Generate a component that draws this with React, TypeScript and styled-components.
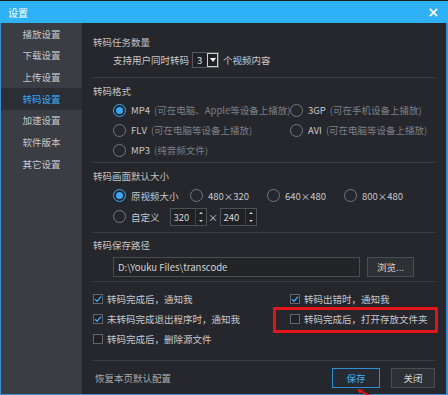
import { JSX } from 'react';
import styled, { createGlobalStyle } from 'styled-components';

const GlobalStyle = createGlobalStyle`
  html, body {
    margin: 0;
    padding: 0;
    background: #1b1d22;
  }
  body {
    font-family: "Noto Sans CJK SC", "Liberation Sans", sans-serif;
    font-size: 9.5px;
    color: #c8c9cc;
  }
`;

const Window = styled.div`
  position: relative;
  width: 448px;
  height: 395px;
  padding-top: 1px;
  box-sizing: border-box;
  display: flex;
  flex-direction: column;
  overflow: hidden;
`;

const TitleBar = styled.div`
  height: 22px;
  flex: none;
  background: #2eb1f7;
  display: flex;
  align-items: center;
  justify-content: space-between;
  padding: 0 10px 0 8px;
  color: #fff;
  font-size: 10px;
`;

const CloseIcon = styled.svg`
  width: 9px;
  height: 9px;
`;

const Body = styled.div`
  flex: 1;
  display: flex;
  min-height: 0;
  border-left: 1px solid #3b8fd2;
  border-right: 2px solid #3b8fd2;
  border-bottom: 1px solid #3b8fd2;
`;

const Sidebar = styled.div`
  width: 81px;
  flex: none;
  background: #3a3d44;
  display: flex;
  flex-direction: column;
`;

const NavItem = styled.div<{ $active?: boolean }>`
  height: 21.65px;
  display: flex;
  align-items: center;
  justify-content: center;
  color: ${(p) => (p.$active ? '#3aa9f5' : '#c6c7ca')};
  background: ${(p) => (p.$active ? '#2b2e34' : 'transparent')};
`;

const Main = styled.div`
  flex: 1;
  min-width: 0;
  background: #25272c;
  display: flex;
  flex-direction: column;
  padding: 0 11px 0 11px;
`;

const Section = styled.div<{ $h: number; $pt: number }>`
  height: ${(p) => p.$h}px;
  flex: none;
  padding-top: ${(p) => p.$pt}px;
  box-sizing: border-box;
  border-bottom: 1px solid #3a3d43;
`;

const Heading = styled.div`
  height: 18px;
  line-height: 18px;
  color: #c2c4c7;
`;

const Row = styled.div<{ $h?: number }>`
  height: ${(p) => p.$h ?? 20}px;
  display: flex;
  align-items: center;
  padding-left: 20px;
`;

const Grid = styled.div<{ $cols: string; $rowH: number }>`
  display: grid;
  grid-template-columns: ${(p) => p.$cols};
  grid-auto-rows: ${(p) => p.$rowH}px;
  align-items: center;
`;

const Option = styled.div`
  display: flex;
  align-items: center;
  white-space: nowrap;
`;

const Radio = styled.span<{ $on?: boolean }>`
  width: 11px;
  height: 11px;
  border-radius: 50%;
  border: 1px solid ${(p) => (p.$on ? '#3aa9f5' : '#74777c')};
  margin-right: 5px;
  flex: none;
  display: flex;
  align-items: center;
  justify-content: center;
  &::after {
    content: '';
    width: 7px;
    height: 7px;
    border-radius: 50%;
    background: ${(p) => (p.$on ? '#3aa9f5' : 'transparent')};
  }
`;

const Hint = styled.span`
  color: #7c7f84;
  margin-left: 4px;
`;

const SelectBox = styled.div`
  width: 27px;
  height: 16px;
  box-sizing: border-box;
  border: 1px solid #55585e;
  background: #1f2125;
  display: flex;
  align-items: center;
  justify-content: space-between;
  padding-left: 4px;
  margin: 0 4px 0 3px;
  color: #e0e0e0;
`;

const DropBtn = styled.span`
  width: 11px;
  height: 14px;
  box-sizing: border-box;
  border: 1px solid #d0d0d0;
  display: flex;
  align-items: center;
  justify-content: center;
  &::after {
    content: '';
    border-left: 3px solid transparent;
    border-right: 3px solid transparent;
    border-top: 4px solid #fff;
  }
`;

const Spin = styled.div`
  width: 37px;
  height: 18px;
  box-sizing: border-box;
  border: 1px solid #4e5157;
  background: #1f2125;
  display: flex;
  align-items: stretch;
  color: #d8d9db;
`;

const SpinValue = styled.span`
  flex: 1;
  display: flex;
  align-items: center;
  padding-left: 3px;
`;

const SpinArrows = styled.span`
  width: 10px;
  border-left: 1px solid #3c3f45;
  display: flex;
  flex-direction: column;
`;

const SpinArrow = styled.span<{ $up?: boolean }>`
  flex: 1;
  display: flex;
  align-items: center;
  justify-content: center;
  &::after {
    content: '';
    border-left: 2px solid transparent;
    border-right: 2px solid transparent;
    ${(p) => (p.$up ? 'border-bottom: 2px solid #d0d0d0;' : 'border-top: 2px solid #d0d0d0;')}
  }
`;

const Times = styled.span`
  width: 13px;
  text-align: center;
  color: #c8c9cc;
`;

const PathInput = styled.div`
  width: 247px;
  height: 20px;
  box-sizing: border-box;
  border: 1px solid #4a4d53;
  background: #222428;
  display: flex;
  align-items: center;
  padding-left: 4px;
  color: #d4d5d7;
`;

const Button = styled.div<{ $primary?: boolean }>`
  height: 20px;
  box-sizing: border-box;
  border: 1px solid ${(p) => (p.$primary ? '#2f8fd3' : '#4a4d53')};
  background: ${(p) => (p.$primary ? '#262b33' : '#2d3035')};
  color: ${(p) => (p.$primary ? '#45aef5' : '#d4d5d7')};
  display: flex;
  align-items: center;
  justify-content: center;
`;

const PathRow = styled.div`
  display: flex;
  align-items: center;
  gap: 7px;
  padding-left: 20px;
  margin-top: 3px;
`;

const Check = styled.span<{ $on?: boolean }>`
  width: 10px;
  height: 10px;
  box-sizing: border-box;
  border: 1px solid #63666c;
  background: #1f2125;
  margin-right: 4px;
  flex: none;
  display: flex;
  align-items: center;
  justify-content: center;
`;

const Footer = styled.div`
  flex: 1;
  display: flex;
  align-items: center;
  justify-content: space-between;
  padding-left: 2px;
  color: #a9abae;
`;

const FooterButtons = styled.div`
  display: flex;
  gap: 11px;
`;

const Highlight = styled.div`
  position: absolute;
  left: 273px;
  top: 307px;
  width: 165px;
  height: 26px;
  box-sizing: border-box;
  border: 3px solid #e4141b;
  pointer-events: none;
`;

const Arrow = styled.svg`
  position: absolute;
  left: 355px;
  top: 388px;
  width: 16px;
  height: 7px;
`;

const nav = ['播放设置', '下载设置', '上传设置', '转码设置', '加速设置', '软件版本', '其它设置'];

const Tick = (): JSX.Element => (
  <svg width="8" height="8" viewBox="0 0 8 8">
    <path d="M1 4.2 L3.1 6.2 L7 1.6" fill="none" stroke="#3aa9f5" strokeWidth="1.4" />
  </svg>
);

const CheckItem = ({ on, label }: { on?: boolean; label: string }): JSX.Element => (
  <Option>
    <Check $on={on}>{on && <Tick />}</Check>
    {label}
  </Option>
);

const RadioItem = ({ on, label, hint }: { on?: boolean; label: string; hint?: string }): JSX.Element => (
  <Option>
    <Radio $on={on} />
    {label}
    {hint && <Hint>{hint}</Hint>}
  </Option>
);

const SpinBox = ({ value }: { value: string }): JSX.Element => (
  <Spin>
    <SpinValue>{value}</SpinValue>
    <SpinArrows>
      <SpinArrow $up />
      <SpinArrow />
    </SpinArrows>
  </Spin>
);

export default function App(): JSX.Element {
  return (
    <Window>
      <GlobalStyle />
      <TitleBar>
        <span>设置</span>
        <CloseIcon viewBox="0 0 10 10">
          <path d="M1 1 L9 9 M9 1 L1 9" stroke="#fff" strokeWidth="2" />
        </CloseIcon>
      </TitleBar>
      <Body>
        <Sidebar>
          {nav.map((n) => (
            <NavItem key={n} $active={n === '转码设置'}>
              {n}
            </NavItem>
          ))}
        </Sidebar>
        <Main>
          <Section $h={55} $pt={10}>
            <Heading>转码任务数量</Heading>
            <Row $h={18}>
              支持用户同时转码
              <SelectBox>
                3<DropBtn />
              </SelectBox>
              个视频内容
            </Row>
          </Section>

          <Section $h={85} $pt={4}>
            <Heading>转码格式</Heading>
            <Row $h={60} style={{ alignItems: 'stretch' }}>
              <Grid $cols="177px 1fr" $rowH={20}>
                <RadioItem on label="MP4" hint="(可在电脑、Apple等设备上播放)" />
                <RadioItem label="3GP" hint="(可在手机设备上播放)" />
                <RadioItem label="FLV" hint="(可在电脑等设备上播放)" />
                <RadioItem label="AVI" hint="(可在电脑等设备上播放)" />
                <RadioItem label="MP3" hint="(纯音频文件)" />
              </Grid>
            </Row>
          </Section>

          <Section $h={70} $pt={4}>
            <Heading>转码画面默认大小</Heading>
            <Row $h={42} style={{ alignItems: 'stretch' }}>
              <Grid $cols="77px 77px 77px 77px" $rowH={21}>
                <RadioItem on label="原视频大小" />
                <RadioItem label="480×320" />
                <RadioItem label="640×480" />
                <RadioItem label="800×480" />
                <Option style={{ gridColumn: '1 / 5' }}>
                  <Radio />
                  自定义
                  <span style={{ width: 10 }} />
                  <SpinBox value="320" />
                  <Times>×</Times>
                  <SpinBox value="240" />
                </Option>
              </Grid>
            </Row>
          </Section>

          <Section $h={49} $pt={3}>
            <Heading>转码保存路径</Heading>
            <PathRow>
              <PathInput>D:\Youku Files\transcode</PathInput>
              <Button style={{ width: 47 }}>浏览...</Button>
            </PathRow>
          </Section>

          <Section $h={79} $pt={7}>
            <Grid $cols="197px 1fr" $rowH={20}>
              <CheckItem on label="转码完成后，通知我" />
              <CheckItem on label="转码出错时，通知我" />
              <CheckItem on label="未转码完成退出程序时，通知我" />
              <CheckItem label="转码完成后，打开存放文件夹" />
              <CheckItem label="转码完成后，删除源文件" />
            </Grid>
          </Section>

          <Footer>
            <span>恢复本页默认配置</span>
            <FooterButtons>
              <Button $primary style={{ width: 48 }}>保存</Button>
              <Button style={{ width: 44 }}>关闭</Button>
            </FooterButtons>
          </Footer>
        </Main>
      </Body>
      <Highlight />
      <Arrow viewBox="0 0 16 7">
        <path d="M2 1 L9 2 L7.5 3.2 L16 7 L11 7 L6 4.3 L4.6 5.6 Z" fill="#e4141b" />
      </Arrow>
    </Window>
  );
}
